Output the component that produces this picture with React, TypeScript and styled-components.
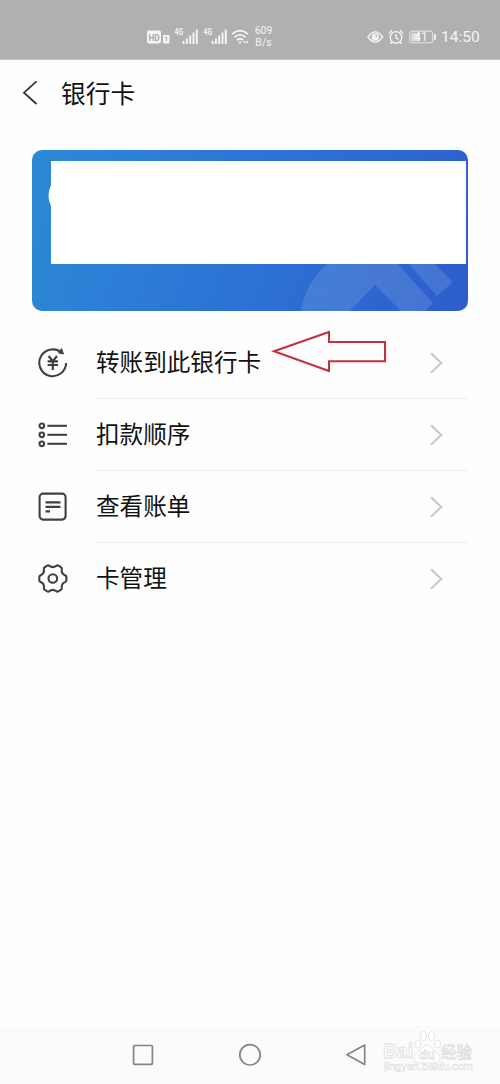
import React from 'react';
import styled, { createGlobalStyle } from 'styled-components';

const Global = createGlobalStyle`
  * { box-sizing: border-box; }
  body { margin: 0; background: #fefefe; }
`;

const Screen = styled.div`
  width: 500px;
  height: 1084px;
  display: flex;
  flex-direction: column;
  background: #fefefe;
  color: #111;
  font-family: 'Noto Sans CJK SC', sans-serif;
  overflow: hidden;
`;

const StatusBar = styled.header`
  height: 60px;
  flex: none;
  background: #b0b0b0;
  border-bottom: 1px solid #c4c4c4;
  display: flex;
  align-items: center;
  justify-content: space-between;
  padding: 15px 20px 0 147px;
  color: #f4f4f4;
  font-family: Roboto, sans-serif;
`;

const StatusGroup = styled.div`
  display: flex;
  align-items: center;
`;

const Speed = styled.div`
  width: 20px;
  margin-left: 4px;
  font-size: 10.5px;
  line-height: 12px;
  text-align: center;
`;

const Clock = styled.div`
  width: 39px;
  margin-left: 4px;
  font-size: 15.5px;
  line-height: 18px;
  white-space: nowrap;
`;

const TitleBar = styled.div`
  height: 90px;
  flex: none;
  display: flex;
  align-items: flex-start;
  padding: 16px 0 0 21px;
`;

const BackIcon = styled.svg`
  width: 18px;
  height: 30px;
  margin: 1px 22px 0 0;
`;

const Title = styled.h1`
  margin: 0;
  font-size: 24.7px;
  line-height: 32px;
  font-weight: 400;
`;

const Card = styled.section`
  position: relative;
  height: 161px;
  flex: none;
  margin: 0 32px;
  padding: 10.5px 2px 48px 19px;
  border-radius: 10px;
  overflow: hidden;
  background: linear-gradient(110deg, #2c8ad3 0%, #2d7dd7 28%, #2c6fd3 60%, #2e5dcb 100%);
`;

const Emblem = styled.svg`
  position: absolute;
  inset: 0;
  width: 436px;
  height: 161px;
`;

const CardInfo = styled.div`
  position: relative;
  height: 103px;
  background: #fff;
`;

const List = styled.ul`
  list-style: none;
  margin: 0;
  padding: 16px 32px 0 37px;
  flex: 1;
`;

const Row = styled.li`
  position: relative;
  height: 72px;
  display: flex;
  align-items: stretch;
`;

const RowIcon = styled.svg`
  width: 32px;
  height: 32px;
  margin: 20px 27px 0 0;
  flex: none;
  fill: none;
  stroke: #404044;
  stroke-width: 2.1;
`;

const RowBody = styled.div<{ $last?: boolean }>`
  flex: 1;
  display: flex;
  align-items: center;
  justify-content: space-between;
  padding-right: 25px;
  border-bottom: 1px solid ${(p) => (p.$last ? 'transparent' : '#f0f0f0')};
`;

const Label = styled.span`
  font-size: 23.6px;
  line-height: 34px;
  margin-top: -3px;
  white-space: nowrap;
`;

const Chevron = styled.svg`
  width: 14px;
  height: 22px;
  fill: none;
  stroke: #c7c7c7;
  stroke-width: 2;
`;

const Arrow = styled.svg`
  position: absolute;
  left: 234px;
  top: 3px;
  width: 116px;
  height: 44px;
`;

const NavBar = styled.nav`
  position: relative;
  height: 58px;
  flex: none;
  background: #fbfbfb;
  display: flex;
  align-items: center;
  padding-left: 131px;
  gap: 83px;
`;

const NavIcon = styled.svg`
  width: 24px;
  height: 24px;
  fill: none;
  stroke: #858585;
  stroke-width: 1.7;
`;

const Watermark = styled.svg`
  position: absolute;
  left: 380px;
  top: 0;
  width: 100px;
  height: 50px;
`;

const TransferIcon = () => (
  <RowIcon viewBox="0 0 32 32">
    <path d="M25.2 6.3A13.4 13.4 0 1 0 29.1 16" />
    <path d="M21.6 5.9L24.6 1.6L26.4 7Z" fill="#404044" strokeWidth="1" />
    <path d="M11.6 9l4.2 5.2L20 9M10.6 14.3h10.4M10.6 18h10.4M15.8 14v9" strokeWidth="2.2" />
  </RowIcon>
);

const OrderIcon = () => (
  <RowIcon viewBox="0 0 32 32">
    {[6.8, 15.8, 24.8].map((y) => (
      <React.Fragment key={y}>
        <circle cx="4.8" cy={y} r="2.3" />
        <path d={`M10.4 ${y}H30`} />
      </React.Fragment>
    ))}
  </RowIcon>
);

const BillIcon = () => (
  <RowIcon viewBox="0 0 32 32">
    <rect x="2.6" y="2.6" width="26" height="26" rx="3.5" />
    <path d="M8.5 11.4h15M8.5 15.9h15M8.5 20.4h4.5" />
  </RowIcon>
);

const ManageIcon = () => (
  <RowIcon viewBox="0 0 32 32" strokeLinejoin="round">
    <path d="M10.2 2.7Q11.3 2 12.4 2.9Q15.8 5.4 19.3 2.9Q20.4 2 21.5 2.7L24.2 4.4Q25.2 5.2 24.8 6.6Q24.2 10.5 28 12.2Q29.3 12.8 29.4 14V17.3Q29.3 18.5 28 19.1Q24.3 20.6 24.8 24.7Q25 26 24.1 26.7L21.4 28.3Q20.2 29 19.2 28.1Q15.8 25.5 12.4 28.1Q11.4 29 10.2 28.3L7.5 26.7Q6.7 26 6.9 24.7Q7.4 20.6 3.6 19.1Q2.4 18.5 2.3 17.3V14Q2.4 12.8 3.6 12.2Q7.5 10.5 6.9 6.6Q6.5 5.2 7.5 4.4Z" />
    <circle cx="15.8" cy="15.5" r="4.3" />
  </RowIcon>
);

const Signal = () => (
  <svg width="26" height="18" viewBox="0 0 26 18" fill="#f4f4f4">
    <text x="0.5" y="7.3" fontSize="8.2" fontWeight="700" fontFamily="Roboto, sans-serif" textLength="8.5" lengthAdjust="spacingAndGlyphs">4G</text>
    <path d="M8.6 13h2v3H8.6zM11.9 10.5h2V16h-2zM15.2 7.5h2V16h-2zM18.5 4.5h2V16h-2zM21.8 1.5h2V16h-2z" />
  </svg>
);

const rows = [
  { label: '转账到此银行卡', Icon: TransferIcon, marked: true },
  { label: '扣款顺序', Icon: OrderIcon },
  { label: '查看账单', Icon: BillIcon },
  { label: '卡管理', Icon: ManageIcon },
];

export default function App() {
  return (
    <Screen>
      <Global />
      <StatusBar>
        <StatusGroup>
          <svg width="27" height="16" viewBox="0 0 27 16">
            <rect x="0" y="1.5" width="14" height="13" rx="2" fill="#f4f4f4" />
            <text x="1.4" y="11.5" fontSize="9" fontWeight="700" fontFamily="Roboto, sans-serif" fill="#aaa" textLength="11.2" lengthAdjust="spacingAndGlyphs">HD</text>
            <rect x="16" y="6" width="6.5" height="8.5" rx="1" fill="#f4f4f4" />
            <path d="M18 8.2h1.5v4" fill="none" stroke="#aaa" />
          </svg>
          <Signal />
          <svg width="2.5" height="1" />
          <Signal />
          <svg width="21" height="18" viewBox="0 0 21 18" fill="none" stroke="#f4f4f4" strokeWidth="1.8">
            <path d="M3 6.2Q11 -1 19 6.2M5.5 9.3Q11 4.5 16.5 9.3M8 12.2Q11 9.8 14 12" />
            <path d="M9.2 13.5L11 16l1.8-2.5z" fill="#f4f4f4" strokeWidth="0" />
            <path d="M14.5 14.2h4.5" strokeDasharray="1.8 .8" />
          </svg>
          <Speed>609<br />B/s</Speed>
        </StatusGroup>
        <StatusGroup>
          <svg width="17" height="16" viewBox="0 0 17 16" fill="none" stroke="#f4f4f4" strokeWidth="1.4">
            <path d="M1 8Q8.2-2.2 15.6 8Q8.2 18.2 1 8Z" />
            <circle cx="8.3" cy="8" r="3" fill="#f4f4f4" />
            <circle cx="9.4" cy="7" r="1" fill="#b0b0b0" stroke="none" />
          </svg>
          <svg width="17" height="16" viewBox="0 0 17 16" fill="none" stroke="#f4f4f4" strokeWidth="1.4" style={{ marginLeft: 4 }}>
            <circle cx="8" cy="8.4" r="5.8" />
            <path d="M8 5v3.8l2.6 1.5M1 4.2L4 1.3M15 4.2L12 1.3M3.8 13L2.3 15M12.2 13l1.5 2" />
          </svg>
          <svg width="28" height="14" viewBox="0 0 28 14" style={{ marginLeft: 4 }}>
            <rect x=".8" y="1.2" width="23" height="11.6" rx="2" fill="none" stroke="#e8e8e8" />
            <rect x="2.4" y="2.8" width="8.5" height="8.4" fill="#dedede" />
            <text x="5.2" y="11.4" fontSize="12" fontFamily="Roboto, sans-serif" fill="#f8f8f8">41</text>
            <rect x="25" y="4" width="1.8" height="6" rx=".6" fill="#f4f4f4" />
          </svg>
          <Clock>14:50</Clock>
        </StatusGroup>
      </StatusBar>

      <TitleBar>
        <BackIcon viewBox="0 0 18 30" fill="none" stroke="#333" strokeWidth="1.8">
          <path d="M15.5 4.3L3 15.7L15.5 27" />
        </BackIcon>
        <Title>银行卡</Title>
      </TitleBar>

      <Card>
        <Emblem viewBox="0 0 436 161">
          <g fill="#fff" fillOpacity=".12">
            <path d="M269 161Q273 134 296 113H365L401 153L393 161H369L343 135L318 161Z" />
            <path d="M376 113H402L421 132L405 146Z" />
          </g>
          <circle cx="39" cy="45.5" r="22.5" fill="#fff" />
        </Emblem>
        <CardInfo />
      </Card>

      <List>
        {rows.map(({ label, Icon, marked }, i) => (
          <Row key={label}>
            <Icon />
            <RowBody $last={i === rows.length - 1}>
              <Label>{label}</Label>
              <Chevron viewBox="0 0 14 22">
                <path d="M2 1.2L12.3 11L2 20.8" />
              </Chevron>
            </RowBody>
            {marked && (
              <Arrow viewBox="0 0 116 44" fill="none" stroke="#c5303a" strokeWidth="2">
                <path d="M3 21.3L58 2V12H114V31.3H58V41Z" />
              </Arrow>
            )}
          </Row>
        ))}
      </List>

      <NavBar>
        <NavIcon viewBox="0 0 24 24"><rect x="2.6" y="2.5" width="18.8" height="18.8" rx="1" /></NavIcon>
        <NavIcon viewBox="0 0 24 24"><circle cx="12" cy="11.8" r="10.2" /></NavIcon>
        <NavIcon viewBox="0 0 24 24" strokeLinejoin="round"><path d="M2 11.8L19.7 2V21.5Z" /></NavIcon>
        <Watermark viewBox="0 0 100 50" fill="#fff" stroke="#dedede" strokeWidth=".8">
          <g fontFamily="'Liberation Sans', sans-serif" fontWeight="700">
            <text x="3" y="32" fontSize="20" textLength="30" lengthAdjust="spacingAndGlyphs">Bai</text>
            <path d="M34 32c0-5 6-7 9-11q4-4 8 0c3 4 9 6 9 11c0 6-6 5-13 5s-13 1-13-5z" />
            <ellipse cx="38" cy="18" rx="3" ry="4" />
            <ellipse cx="43.5" cy="10" rx="3" ry="4.5" />
            <ellipse cx="51.5" cy="10" rx="3" ry="4.5" />
            <ellipse cx="57.5" cy="18" rx="3" ry="4" />
            <text x="39" y="33" fontSize="13" textLength="16" lengthAdjust="spacingAndGlyphs">du</text>
            <text x="61" y="32" fontSize="16" fontWeight="400" fontFamily="'Noto Sans CJK SC', sans-serif" textLength="31" lengthAdjust="spacingAndGlyphs">经验</text>
          </g>
          <text x="4" y="44" fontSize="10" fontFamily="'Liberation Sans', sans-serif" strokeWidth=".5" textLength="89" lengthAdjust="spacingAndGlyphs">jingyan.baidu.com</text>
        </Watermark>
      </NavBar>
    </Screen>
  );
}
